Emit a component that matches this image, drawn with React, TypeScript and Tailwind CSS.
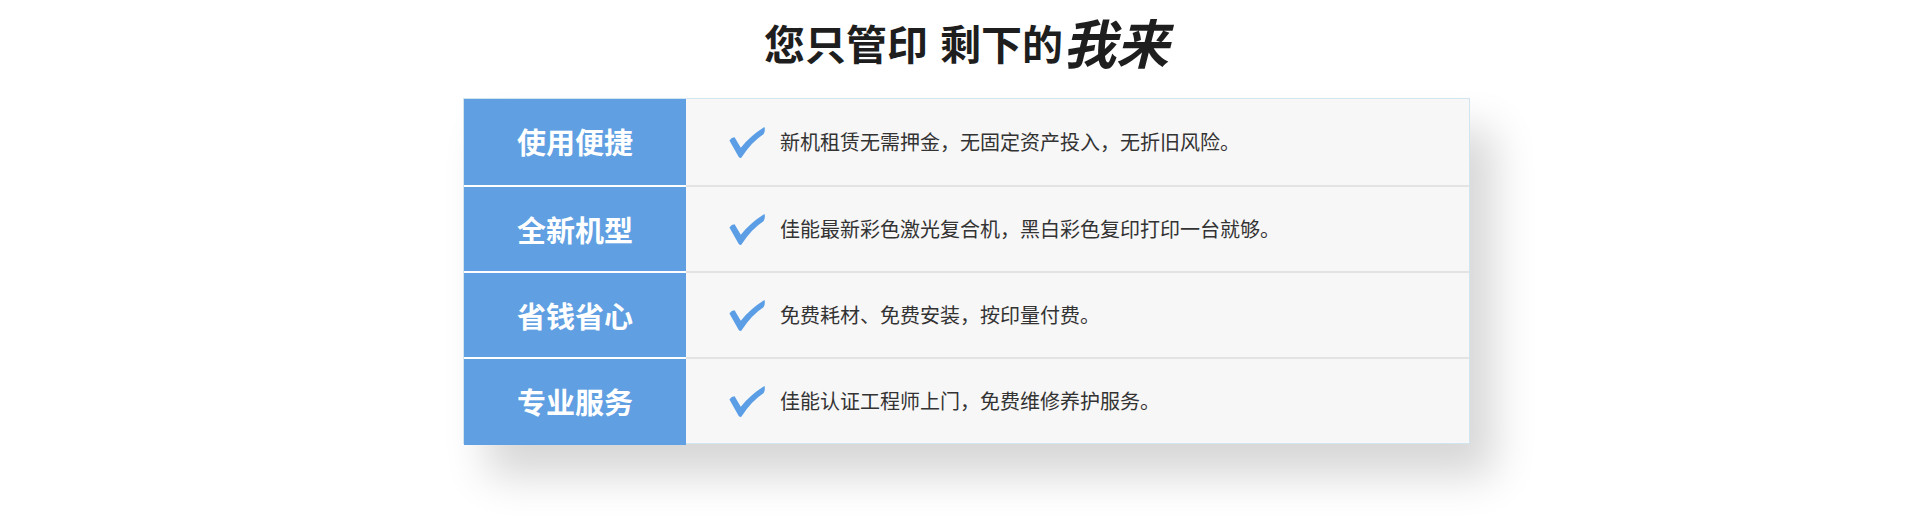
import React from "react";

const rows = [
  { label: "使用便捷", text: "新机租赁无需押金，无固定资产投入，无折旧风险。" },
  { label: "全新机型", text: "佳能最新彩色激光复合机，黑白彩色复印打印一台就够。" },
  { label: "省钱省心", text: "免费耗材、免费安装，按印量付费。" },
  { label: "专业服务", text: "佳能认证工程师上门，免费维修养护服务。" },
];

const font = "font-['Microsoft_YaHei','Noto_Sans_CJK_SC',sans-serif]";

const Check = () => (
  <svg width="40" height="33" viewBox="0 0 38 32" className="shrink-0">
    <path
      d="M1 14 Q3 11 6 11 L12 21 Q22 9 35 1 Q36 5 34 8 Q23 15 13 30 Q12 32 10 30 Z"
      fill="#5b9ee6"
    />
  </svg>
);

export default function App() {
  return (
    <div className={`w-full h-[526px] bg-white ${font}`}>
      <div className="ml-[463px] w-[1007px]">
        <h1 className="h-[98px] pt-[12px] flex items-start justify-center text-[41px] leading-[60px] font-bold text-[#1e1e1e]">
          <span>您只管印</span>
          <span className="ml-[12px]">剩下的</span>
          <span className="italic text-[53px] leading-[58px]">我来</span>
        </h1>
        <div className="border border-[#d3e4f1] bg-[#f7f7f7] shadow-[24px_32px_40px_rgba(0,0,0,0.16)]">
          {rows.map((r, i) => (
            <div
              key={r.label}
              className={`flex h-[86px] ${i > 0 ? "border-t-2 border-[#e3e3e3]" : ""}`}
            >
              <div
                className={`w-[222px] flex items-center justify-center bg-[#5f9fe2] text-white text-[29px] font-bold ${i > 0 ? "-mt-[2px] border-t-2 border-white h-[88px]" : ""}`}
              >
                {r.label}
              </div>
              <div className="flex items-center pl-[42px]">
                <Check />
                <span className="ml-[12px] text-[20px] text-[#333333]">{r.text}</span>
              </div>
            </div>
          ))}
        </div>
      </div>
    </div>
  );
}
